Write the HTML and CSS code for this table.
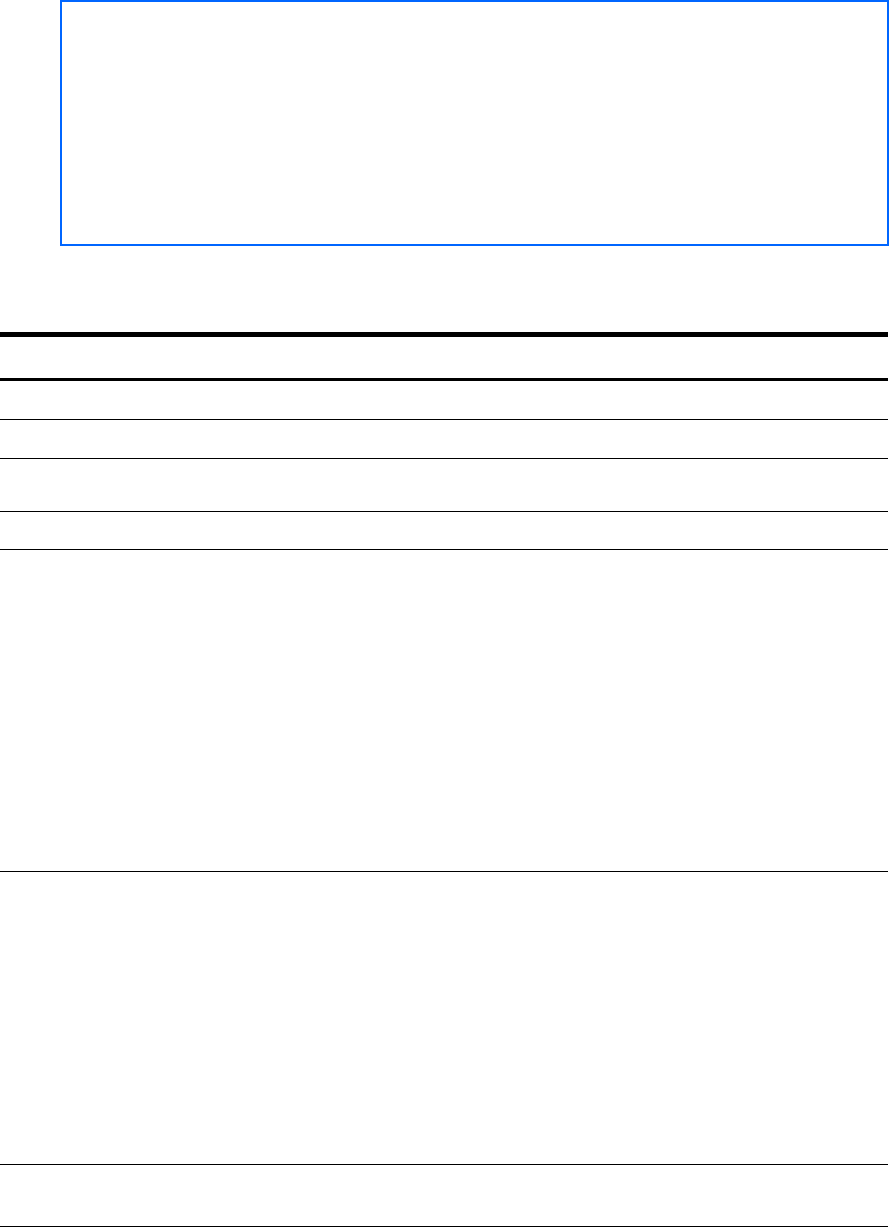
FILE: index.html
```html
<!DOCTYPE html>
<html lang="en">
<head>
  <meta charset="UTF-8">
  <title>Report</title>
  <link rel="stylesheet" href="styles.css">
</head>
<body>
  <div class="figure"></div>

  <div class="table">
    <div class="row head"></div>
    <div class="row r1"></div>
    <div class="row r2"></div>
    <div class="row r3"></div>
    <div class="row r4"></div>
    <div class="row r5"></div>
    <div class="row r6"></div>
    <div class="row r7"></div>
  </div>
</body>
</html>
```

FILE: styles.css
```css
body {
  margin: 0;
  font-family: 'Liberation Sans', Arial, sans-serif;
  background: #ffffff;
  color: #000000;
}

/* blue framed box at the top */
.figure {
  margin-left: 60px;
  width: 825px;
  height: 242px;
  border: 2px solid #0066ff;
}

.table {
  margin-top: 86px;
  width: 888px;
  border-top: 5px solid #000;
}

.row {
  border-bottom: 1px solid #000;
}

.head {
  height: 41px;
  border-bottom: 3px solid #000;
}

.r1 { height: 38px; }
.r2 { height: 38px; }
.r3 { height: 52px; }
.r4 { height: 37px; }
.r5 { height: 321px; }
.r6 { height: 292px; }
.r7 { height: 61px; }
```
